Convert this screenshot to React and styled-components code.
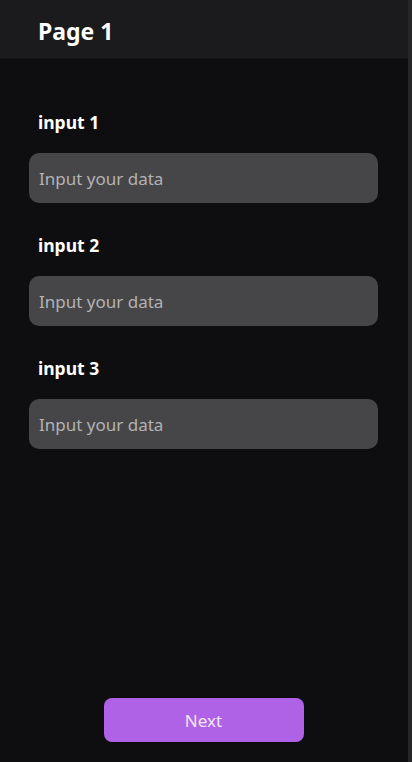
import React from 'react';
import styled, { createGlobalStyle } from 'styled-components';

const GlobalStyle = createGlobalStyle`
  html, body {
    margin: 0;
    padding: 0;
    background-color: #0e0e10;
  }
  * {
    box-sizing: border-box;
  }
`;

const StyledPage = styled.div`
  display: flex;
  flex-direction: column;
  min-height: 100vh;
  width: 412px;
  background-color: #0e0e10;
  border-right: 4px solid #262628;
  font-family: 'Noto Sans', 'Open Sans', sans-serif;
`;

const StyledHeader = styled.header`
  height: 59px;
  display: flex;
  align-items: center;
  padding: 3px 0 0 38px;
  background-color: #1b1b1d;
  border-bottom: 1px solid #141416;
`;

const StyledTitle = styled.h1`
  margin: 0;
  color: #fff;
  font-size: 23px;
  font-weight: 700;
`;

const StyledForm = styled.form`
  display: flex;
  flex-direction: column;
  flex: 1;
  padding: 51px 30px 20px 29px;
`;

const StyledField = styled.div`
  display: flex;
  flex-direction: column;
  margin-bottom: 30px;
`;

const StyledLabel = styled.label`
  color: #fff;
  font-size: 17.5px;
  font-weight: 700;
  line-height: 24px;
  padding-left: 9px;
  margin-bottom: 19px;
`;

const StyledInput = styled.input`
  width: 349px;
  height: 50px;
  padding: 0 10px;
  border: none;
  border-radius: 10px;
  outline: none;
  background-color: #464648;
  color: #fff;
  font-family: inherit;
  font-size: 17px;
  &::placeholder {
    color: #b2b2b4;
  }
`;

const StyledNextButton = styled.button`
  align-self: center;
  margin-top: auto;
  width: 200px;
  height: 44px;
  border: none;
  border-radius: 8px;
  background-color: #b062e6;
  color: #f0e6f4;
  font-family: inherit;
  font-size: 17px;
  cursor: pointer;
`;

const fields = ['input 1', 'input 2', 'input 3'];

const App = () => {
  return (
    <>
      <GlobalStyle />
      <StyledPage>
        <StyledHeader>
          <StyledTitle>Page 1</StyledTitle>
        </StyledHeader>
        <StyledForm onSubmit={e => e.preventDefault()}>
          {fields.map(field => (
            <StyledField key={field}>
              <StyledLabel>{field}</StyledLabel>
              <StyledInput placeholder="Input your data" />
            </StyledField>
          ))}
          <StyledNextButton type="submit">Next</StyledNextButton>
        </StyledForm>
      </StyledPage>
    </>
  );
};

export default App;
